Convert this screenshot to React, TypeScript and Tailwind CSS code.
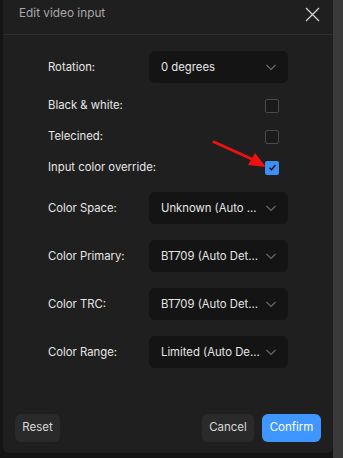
import React from "react";

const font = { fontFamily: "Inter, 'Noto Sans', sans-serif" };

const Chevron = () => (
  <svg width="12" height="12" viewBox="0 0 12 12" fill="none">
    <path d="M1.5 4 L6 8.5 L10.5 4" stroke="#6b6b6b" strokeWidth="1.1" />
  </svg>
);

const SelectRow: React.FC<{ label: string; value: string; className?: string }> = ({ label, value, className }) => (
  <div className={"flex items-center h-[32px] " + (className || "")}>
    <div className="w-[101px] text-[11.3px] text-[#e6e6e6] whitespace-nowrap">{label}</div>
    <div className="w-[139px] h-[32px] rounded-md bg-[#141414] flex items-center pl-[12px] pr-[11px] justify-between">
      <span className="text-[11.3px] text-[#e6e6e6] whitespace-nowrap overflow-hidden max-w-[100px]">{value}</span>
      <Chevron />
    </div>
  </div>
);

const CheckRow: React.FC<{ label: string; checked?: boolean }> = ({ label, checked }) => (
  <div className="flex items-center h-[31px]">
    <div className="w-[101px] text-[11.3px] text-[#e6e6e6] whitespace-nowrap">{label}</div>
    <div className="w-[139px] flex justify-end pr-[9px]">
      {checked ? (
        <div className="w-[14px] h-[14px] rounded-[2px] bg-[#3d8ef5] flex items-center justify-center">
          <svg width="9" height="9" viewBox="0 0 9 9" fill="none">
            <path d="M1.5 4.8 L3.5 6.8 L7.5 2" stroke="#141414" strokeWidth="1.4" />
          </svg>
        </div>
      ) : (
        <div className="w-[14px] h-[14px] rounded-[2px] border border-[#4a4a4a] bg-[#1a1a1a]" />
      )}
    </div>
  </div>
);

export default function App() {
  return (
    <div className="w-[343px] h-[458px] bg-[#141414] flex relative" style={font}>
      <div className="ml-[3px] w-[330px] h-[453px] bg-[#1f1f1f] rounded-b-md flex flex-col">
        <div className="h-[35px] border-b border-[#2c2c2c] flex items-center justify-between pl-[16px] pr-[13px] pb-[6px]">
          <span className="text-[11.8px] text-[#a8a8a8]">Edit video input</span>
          <svg width="15" height="15" viewBox="0 0 15 15" fill="none">
            <path d="M1 1 L14 14 M14 1 L1 14" stroke="#d0d0d0" strokeWidth="1.3" />
          </svg>
        </div>
        <div className="flex flex-col pl-[45px] pt-[16px]">
          <SelectRow label="Rotation:" value="0 degrees" />
          <div className="mt-[7px]">
            <CheckRow label="Black & white:" />
            <CheckRow label="Telecined:" />
            <CheckRow label="Input color override:" checked />
          </div>
          <SelectRow label="Color Space:" value="Unknown (Auto ..." className="mt-[9px]" />
          <SelectRow label="Color Primary:" value="BT709 (Auto Det..." className="mt-[16px]" />
          <SelectRow label="Color TRC:" value="BT709 (Auto Det..." className="mt-[16px]" />
          <SelectRow label="Color Range:" value="Limited (Auto De..." className="mt-[16px]" />
        </div>
        <div className="mt-auto flex items-center px-[12px] pb-[11px] gap-[8px]">
          <button className="h-[28px] w-[45px] rounded-md bg-[#2a2a2a] text-[11.5px] text-[#d8d8d8]">Reset</button>
          <div className="flex-1" />
          <button className="h-[28px] w-[52px] rounded-md bg-[#2a2a2a] text-[11.5px] text-[#d8d8d8]">Cancel</button>
          <button className="h-[28px] w-[59px] rounded-md bg-[#4096ff] text-[11.5px] text-white">Confirm</button>
        </div>
      </div>
      <div className="w-[10px] h-[458px] bg-[#3a3a3a]" />
      <svg className="absolute left-0 top-0 pointer-events-none" width="343" height="458" viewBox="0 0 343 458">
        <line x1="214" y1="142" x2="254" y2="160" stroke="#ee1111" strokeWidth="3" strokeLinecap="round" />
        <polygon points="266,167 248,165 255,153" fill="#ee1111" />
      </svg>
    </div>
  );
}
